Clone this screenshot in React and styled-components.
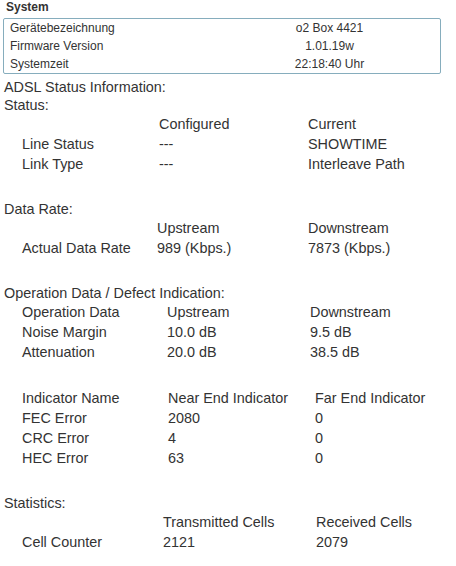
import styled, { createGlobalStyle } from 'styled-components';

const GlobalStyle = createGlobalStyle`
    body {
        margin: 0;
        background: #fff;
        font-family: 'Liberation Sans', Arial, sans-serif;
        color: #333;
    }
`;

const systemRows = [
    ['Gerätebezeichnung', 'o2 Box 4421'],
    ['Firmware Version', '1.01.19w'],
    ['Systemzeit', '22:18:40 Uhr'],
];

const sections = [
    {
        title: 'Status:',
        tables: [
            {
                cols: '137px 149px 1fr',
                rows: [
                    ['', 'Configured', 'Current'],
                    ['Line Status', '---', 'SHOWTIME'],
                    ['Link Type', '---', 'Interleave Path'],
                ],
            },
        ],
    },
    {
        title: 'Data Rate:',
        tables: [
            {
                cols: '135px 151px 1fr',
                rows: [
                    ['', 'Upstream', 'Downstream'],
                    ['Actual Data Rate', '989 (Kbps.)', '7873 (Kbps.)'],
                ],
            },
        ],
    },
    {
        title: 'Operation Data / Defect Indication:',
        tables: [
            {
                cols: '145px 143px 1fr',
                rows: [
                    ['Operation Data', 'Upstream', 'Downstream'],
                    ['Noise Margin', '10.0 dB', '9.5 dB'],
                    ['Attenuation', '20.0 dB', '38.5 dB'],
                ],
            },
            {
                cols: '146px 147px 1fr',
                rows: [
                    ['Indicator Name', 'Near End Indicator', 'Far End Indicator'],
                    ['FEC Error', '2080', '0'],
                    ['CRC Error', '4', '0'],
                    ['HEC Error', '63', '0'],
                ],
            },
        ],
    },
    {
        title: 'Statistics:',
        tables: [
            {
                cols: '141px 153px 1fr',
                rows: [
                    ['', 'Transmitted Cells', 'Received Cells'],
                    ['Cell Counter', '2121', '2079'],
                ],
            },
        ],
    },
];

const App = () => {
    return (
        <Page>
            <GlobalStyle />
            <SystemTitle>System</SystemTitle>
            <SystemBox>
                {systemRows.map(([label, value]) => (
                    <SystemRow key={label}>
                        <SystemLabel>{label}</SystemLabel>
                        <SystemValue>{value}</SystemValue>
                    </SystemRow>
                ))}
            </SystemBox>
            <PageTitle>ADSL Status Information:</PageTitle>
            {sections.map((section) => (
                <Section key={section.title}>
                    <SectionTitle>{section.title}</SectionTitle>
                    {section.tables.map((table, i) => (
                        <DataTable key={i} cols={table.cols}>
                            {table.rows.map((row) =>
                                row.map((cell, j) => <Cell key={row[1] + j}>{cell}</Cell>)
                            )}
                        </DataTable>
                    ))}
                </Section>
            ))}
        </Page>
    );
};

export default App;

const Page = styled.div`
    width: 448px;
    padding: 0 4px 0 3px;
`;

const SystemTitle = styled.div`
    font-size: 12px;
    font-weight: 700;
    line-height: 14px;
    padding-left: 3px;
    color: #333;
`;

const SystemBox = styled.div`
    margin-top: 4px;
    width: 438px;
    border: 1px solid #86adbd;
    border-radius: 2px;
    box-sizing: border-box;
    padding: 0 0 0 6px;
`;

const SystemRow = styled.div`
    display: grid;
    grid-template-columns: 209px 1fr;
    font-size: 12px;
    line-height: 18px;
    color: #333;
`;

const SystemLabel = styled.div``;

const SystemValue = styled.div`
    text-align: center;
`;

const PageTitle = styled.div`
    margin-top: 4px;
    padding-left: 1px;
    font-size: 14.4px;
    line-height: 18px;
`;

const Section = styled.section`
    padding-left: 1px;
`;

const SectionTitle = styled.div`
    font-size: 14.4px;
    line-height: 18px;
`;

const DataTable = styled.div`
    display: grid;
    grid-template-columns: ${(p) => p.cols};
    padding-left: 18px;
    margin-bottom: 26px;
    font-size: 14.4px;
    line-height: 20px;
`;

const Cell = styled.div`
    white-space: nowrap;
`;
